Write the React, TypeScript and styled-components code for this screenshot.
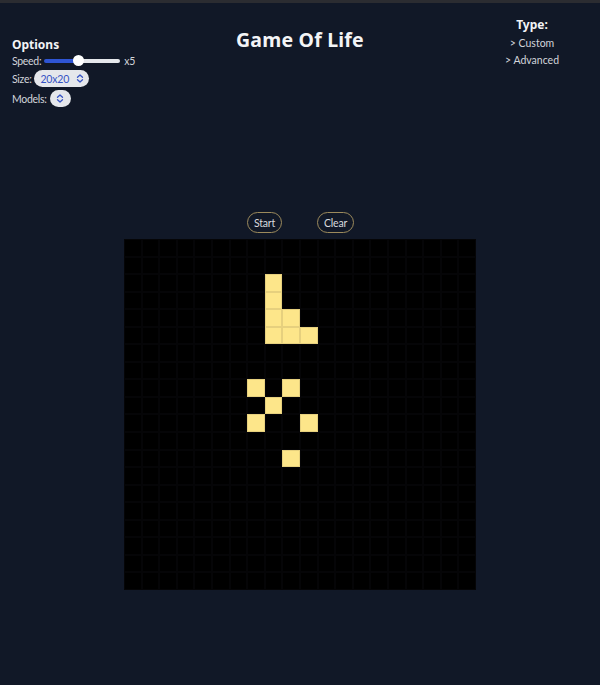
import React from "react";
import styled, { createGlobalStyle } from "styled-components";

const Global = createGlobalStyle`
  html, body { margin: 0; padding: 0; background: #111827; }
  body { font-family: Lato, "Noto Sans", sans-serif; color: #e5e7eb; }
`;

const TopBar = styled.div`
  height: 3px;
  background: #2b2c31;
`;

const Header = styled.header`
  display: grid;
  grid-template-columns: 1fr auto 1fr;
  align-items: start;
`;

const Options = styled.section`
  padding: 34px 0 0 12px;
  display: flex;
  flex-direction: column;
  font-size: 10.5px;
  letter-spacing: -0.3px;
  color: #d1d5db;
`;

const OptionsTitle = styled.h3`
  margin: 0;
  font-family: "Noto Sans", sans-serif;
  font-size: 12px;
  font-weight: 700;
  letter-spacing: 0;
  color: #f3f4f6;
  line-height: 16px;
`;

const Row = styled.div<{ $h: number }>`
  display: flex;
  align-items: center;
  gap: 3px;
  height: ${(p) => p.$h}px;
`;

const Range = styled.input`
  -webkit-appearance: none;
  appearance: none;
  width: 76px;
  height: 4px;
  margin: 0 1px 0 0;
  border-radius: 2px;
  background: linear-gradient(to right, #2f55d4 0 44%, #e5e7eb 44% 100%);
  outline: none;
  &::-webkit-slider-thumb {
    -webkit-appearance: none;
    width: 11px;
    height: 11px;
    border-radius: 50%;
    background: #ffffff;
    border: none;
  }
`;

const Select = styled.div<{ $iconOnly?: boolean }>`
  display: inline-flex;
  align-items: center;
  justify-content: ${(p) => (p.$iconOnly ? "center" : "flex-start")};
  gap: 7px;
  width: ${(p) => (p.$iconOnly ? "21px" : "auto")};
  height: 17px;
  padding: ${(p) => (p.$iconOnly ? "0" : "0 5px 0 6px")};
  border-radius: 9px;
  background: #e5e7eb;
  color: #3553c4;
  font-size: 10.5px;
  letter-spacing: -0.2px;
  box-sizing: border-box;
`;

const Title = styled.h1`
  margin: 23px 0 0;
  font-family: "Noto Sans", sans-serif;
  font-size: 19.5px;
  font-weight: 700;
  letter-spacing: 0.2px;
  color: #f3f4f6;
`;

const TypeBox = styled.nav`
  justify-self: end;
  width: 100px;
  margin: 14px 18px 0 0;
  display: flex;
  flex-direction: column;
  align-items: center;
  gap: 2px;
  font-size: 10.5px;
  color: #d1d5db;
`;

const TypeTitle = styled.h3`
  margin: 0 0 1px;
  font-family: "Noto Sans", sans-serif;
  font-size: 12px;
  font-weight: 700;
  color: #f3f4f6;
  line-height: 16px;
`;

const TypeLink = styled.span`
  line-height: 15px;
`;

const Main = styled.main`
  display: flex;
  flex-direction: column;
  align-items: center;
  margin-top: 104px;
  gap: 6px;
`;

const Controls = styled.div`
  display: flex;
  gap: 35px;
  padding-left: 1px;
`;

const Button = styled.button`
  height: 21px;
  padding: 0 6px;
  border-radius: 11px;
  border: 1px solid #9c8a5c;
  background: transparent;
  color: #d8dade;
  font-family: inherit;
  font-size: 10.5px;
  letter-spacing: -0.2px;
`;

const Board = styled.div`
  width: 352px;
  height: 351px;
  display: grid;
  grid-template-columns: repeat(20, 1fr);
  grid-template-rows: repeat(20, 1fr);
  background: #000;
`;

const Cell = styled.div<{ $alive: boolean }>`
  box-sizing: border-box;
  border: 0.5px solid ${(p) => (p.$alive ? "#e6d07e" : "#050507")};
  background: ${(p) => (p.$alive ? "#fde68a" : "#000")};
`;

const alive = new Set([
  "2-8", "3-8", "4-8", "5-8", "4-9", "5-9", "5-10",
  "8-7", "8-9", "9-8", "10-7", "10-10", "12-9",
]);

const Chevrons = () => (
  <svg width="8" height="9" viewBox="0 0 8 9" fill="none" stroke="#3553c4" strokeWidth="1.3" strokeLinecap="round" strokeLinejoin="round">
    <path d="M1.5 3.3 4 1 6.5 3.3" />
    <path d="M1.5 5.7 4 8 6.5 5.7" />
  </svg>
);

export default function App() {
  const cells = [];
  for (let r = 0; r < 20; r++) {
    for (let c = 0; c < 20; c++) {
      cells.push(<Cell key={`${r}-${c}`} $alive={alive.has(`${r}-${c}`)} />);
    }
  }
  return (
    <>
      <Global />
      <TopBar />
      <Header>
        <Options>
          <OptionsTitle>Options</OptionsTitle>
          <Row $h={15}>
            Speed: <Range type="range" min={1} max={10} defaultValue={5} /> x5
          </Row>
          <Row $h={21}>
            Size: <Select>20x20 <Chevrons /></Select>
          </Row>
          <Row $h={19}>
            Models:
            <Select $iconOnly>
              <Chevrons />
            </Select>
          </Row>
        </Options>
        <Title>Game Of Life</Title>
        <TypeBox>
          <TypeTitle>Type:</TypeTitle>
          <TypeLink>&gt; Custom</TypeLink>
          <TypeLink>&gt; Advanced</TypeLink>
        </TypeBox>
      </Header>
      <Main>
        <Controls>
          <Button>Start</Button>
          <Button>Clear</Button>
        </Controls>
        <Board>{cells}</Board>
      </Main>
    </>
  );
}
